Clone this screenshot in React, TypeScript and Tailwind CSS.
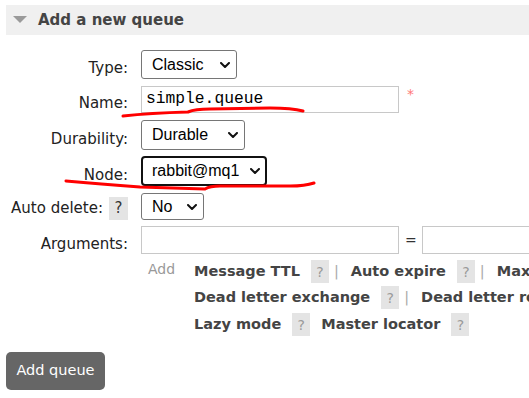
import type { ReactNode } from 'react';

const sans = "font-['DejaVu_Sans',Verdana,sans-serif]";

function Chevron() {
  return (
    <svg width="10" height="6" viewBox="0 0 10 6" className="shrink-0">
      <path d="M1 1 L5 5 L9 1" fill="none" stroke="#111" strokeWidth="2" strokeLinecap="round" strokeLinejoin="round" />
    </svg>
  );
}

function FakeSelect({ value, width, height = 'h-[29px]', focused = false }: { value: string; width: string; height?: string; focused?: boolean }) {
  return (
    <div
      className={`${width} ${height} shrink-0 flex items-center justify-between bg-white font-['Liberation_Sans',Arial,sans-serif] text-[16px] text-black ${
        focused ? 'border-2 border-[#111] rounded-[4px] pl-[9px] pr-[5px]' : 'border border-[#767676] rounded-[3px] pl-[10px] pr-[6px]'
      }`}
    >
      <span>{value}</span>
      <Chevron />
    </div>
  );
}

function Help({ dark = false, className = '' }: { dark?: boolean; className?: string }) {
  return (
    <span
      className={`inline-flex shrink-0 w-[18px] h-[23px] items-center justify-center bg-[#e4e4e4] text-[14px] font-normal leading-none ${
        dark ? 'text-[#333]' : 'text-[#9a9a9a]'
      } ${className}`}
    >
      ?
    </span>
  );
}

function Row({ label, children, className = '', labelClass = 'pt-[8px]' }: { label: ReactNode; children: ReactNode; className?: string; labelClass?: string }) {
  return (
    <div className={`flex items-center ${className}`}>
      <div className={`w-[122px] shrink-0 flex justify-end items-center text-[15px] leading-none text-[#222] whitespace-nowrap ${labelClass}`}>
        {label}
      </div>
      <div className="ml-[13px] shrink-0 flex items-center">{children}</div>
    </div>
  );
}

function Sep() {
  return <span className="ml-[5px] mr-[12px] text-[#aaa] font-normal shrink-0">|</span>;
}

function Arg({ name, sep = false }: { name: string; sep?: boolean }) {
  return (
    <>
      <span className="shrink-0">{name}</span>
      <Help className="ml-[11px]" />
      {sep ? <Sep /> : <span className="w-[11px] shrink-0" />}
    </>
  );
}

export default function App() {
  return (
    <div className={`relative w-[529px] h-[398px] overflow-hidden bg-white ${sans}`}>
      <div className="pt-[5px] pl-[6px]">
        {/* Header */}
        <div className="h-[30px] bg-[#f0f0f0] flex items-center">
          <svg width="14" height="8" viewBox="0 0 14 8" className="ml-[7px]">
            <path d="M0 0 H14 L7 7 Z" fill="#9a9a9a" />
          </svg>
          <span className="ml-[11px] text-[15px] font-bold text-[#444]">Add a new queue</span>
        </div>

        {/* Form */}
        <div className="mt-[15px]">
          <Row label="Type:">
            <FakeSelect value="Classic" width="w-[96px]" />
          </Row>
          <Row label="Name:" className="mt-[7px]">
            <div className="w-[258px] h-[27px] shrink-0 border border-[#c8c8c8] flex items-center pl-[4px] font-['Liberation_Mono','Courier_New',monospace] text-[16.3px] text-black">
              simple.queue
            </div>
            <span className="ml-[8px] -mt-[10px] text-[14px] text-[#f77]">*</span>
          </Row>
          <Row label="Durability:" className="mt-[7px]">
            <FakeSelect value="Durable" width="w-[104px]" height="h-[30px]" />
          </Row>
          <Row label="Node:" className="mt-[6px]">
            <FakeSelect value="rabbit@mq1" width="w-[126px]" height="h-[30px]" focused />
          </Row>
          <Row
            label={
              <span className="flex items-center">
                Auto delete:
                <Help dark className="ml-[6px] w-[19px] h-[22px] text-[15px]" />
              </span>
            }
            labelClass="self-end"
            className="mt-[7px]"
          >
            <FakeSelect value="No" width="w-[63px]" height="h-[27px]" />
          </Row>
          <Row label="Arguments:" className="mt-[6px]">
            <div className="w-[258px] h-[28px] shrink-0 border border-[#c8c8c8]" />
            <span className="ml-[6px] shrink-0 text-[14px] text-[#333]">=</span>
            <div className="ml-[5px] w-[140px] h-[28px] border border-[#c8c8c8] shrink-0" />
          </Row>

          {/* Argument shortcuts */}
          <div className="flex mt-[5px] ml-[135px]">
            <div className="w-[53px] shrink-0 pl-[7px] text-[14px] text-[#999]">Add</div>
            <div className="shrink-0 text-[14.5px] font-bold text-[#444] whitespace-nowrap">
              <div className="flex items-center h-[23px] mt-[1px]">
                <Arg name="Message TTL" sep />
                <Arg name="Auto expire" sep />
                <span className="shrink-0">Max length</span>
              </div>
              <div className="flex items-center h-[23px] mt-[3px]">
                <Arg name="Dead letter exchange" sep />
                <span className="shrink-0">Dead letter routing key</span>
              </div>
              <div className="flex items-center h-[23px] mt-[4px]">
                <Arg name="Lazy mode" />
                <Arg name="Master locator" />
              </div>
            </div>
          </div>
        </div>

        <button className="mt-[16px] w-[99px] h-[38px] rounded-[5px] bg-[#666] text-white text-[14.5px] flex items-center justify-center">
          Add queue
        </button>
      </div>

      {/* hand-drawn annotation strokes */}
      <svg className="absolute left-0 top-0 pointer-events-none" width="529" height="398">
        <path
          d="M123 116 Q150 113 188 112 Q195 109 210 109 L270 108 Q292 108 303 111"
          fill="none"
          stroke="#ff0000"
          strokeWidth="3"
          strokeLinecap="round"
          strokeLinejoin="round"
        />
        <path
          d="M66 181 Q100 184 140 187 L205 189 Q210 186 220 186 L290 186 Q305 186 314 183"
          fill="none"
          stroke="#ff0000"
          strokeWidth="3"
          strokeLinecap="round"
          strokeLinejoin="round"
        />
      </svg>
    </div>
  );
}
